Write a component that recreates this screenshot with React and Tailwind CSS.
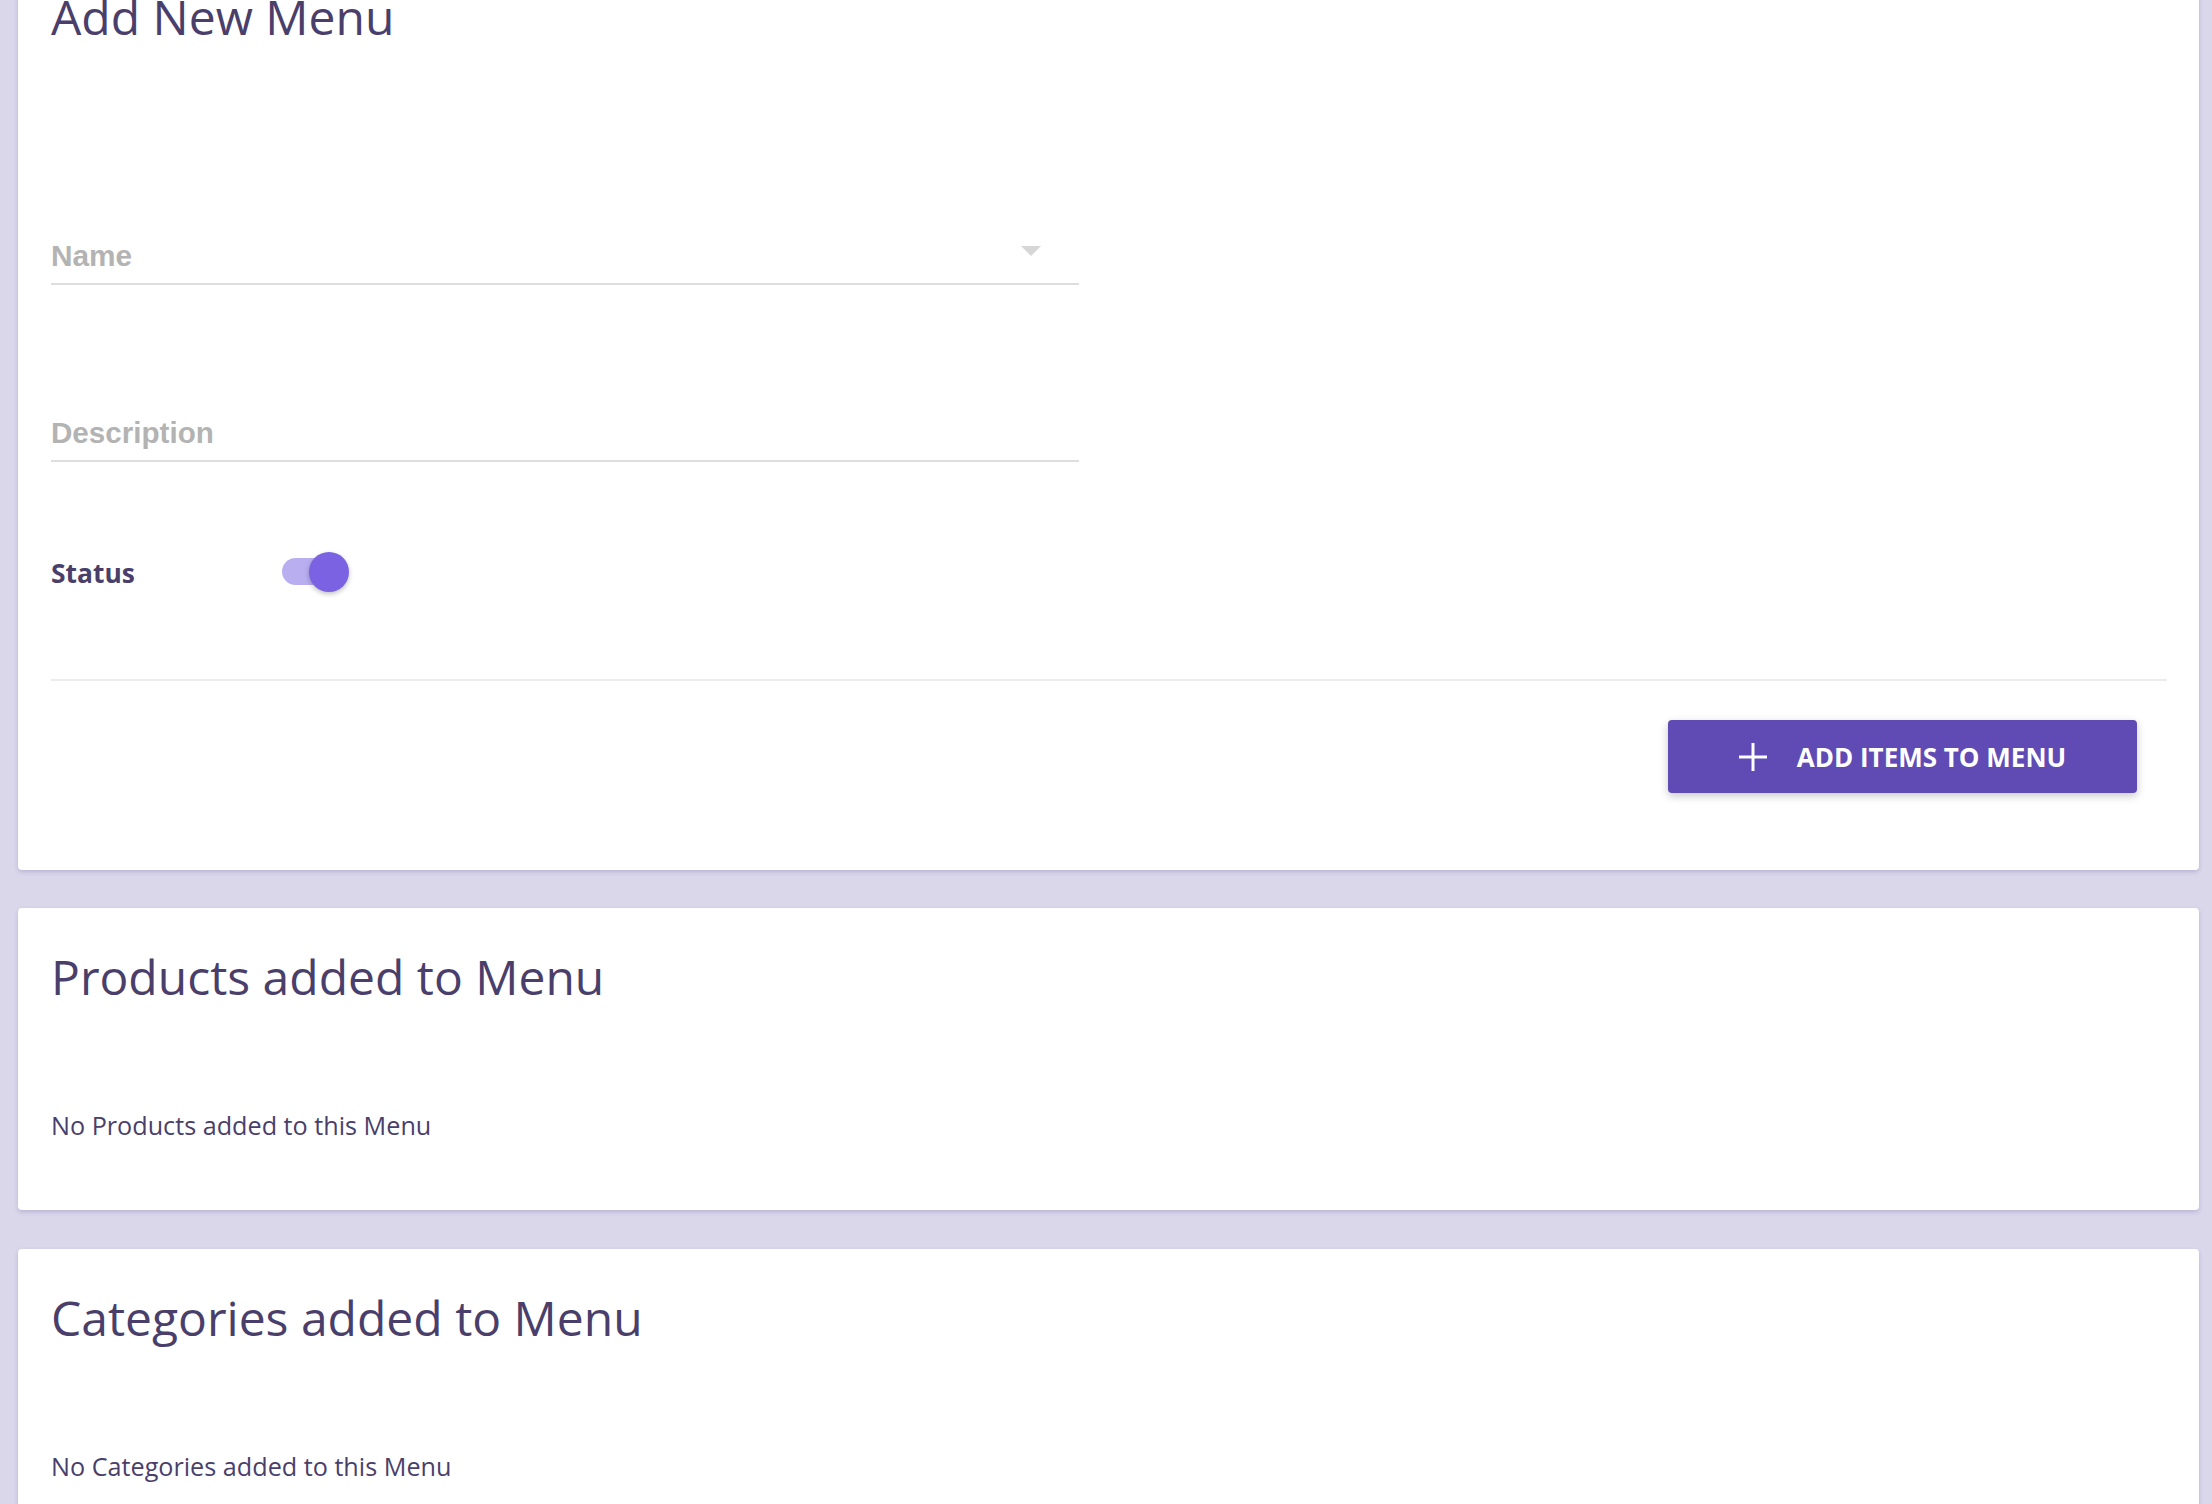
import React from "react";

function InfoCard({ title, text, className = "" }) {
  return (
    <div
      className={`rounded-[4px] bg-white pl-[33px] pr-[32px] pt-[40px] pb-[65px] shadow-[0_2px_4px_rgba(70,60,130,0.22)] ${className}`}
    >
      <h2 className="font-['Open_Sans',sans-serif] text-[48px] font-normal leading-[57.6px] text-[#4a3f6b]">
        {title}
      </h2>
      <p className="mt-[102px] font-['Open_Sans',sans-serif] text-[25.2px] leading-[37.5px] text-[#4a3f6b]">
        {text}
      </p>
    </div>
  );
}

export default function App() {
  return (
    <div className="h-[1504px] overflow-hidden bg-[#dad7eb] pl-[18px] pr-[13px]">
      {/* Add New Menu card */}
      <div className="mt-[-52px] rounded-[4px] bg-white pl-[33px] pr-[32px] pt-[40px] pb-[77px] shadow-[0_2px_4px_rgba(70,60,130,0.22)]">
        <h1 className="font-['Open_Sans',sans-serif] text-[48px] font-normal leading-[57.6px] text-[#4a3f6b]">
          Add New Menu
        </h1>

        {/* Name select */}
        <div className="mt-[194px] flex w-[1028px] items-start justify-between border-b-2 border-[#dedede] pb-[11px]">
          <span className="font-['Liberation_Sans',Arial,sans-serif] text-[29.8px] font-bold leading-[32px] text-[#b3b3b3]">
            Name
          </span>
          <svg
            className="mr-[38px] mt-[6px]"
            width="20"
            height="10"
            viewBox="0 0 20 10"
          >
            <polygon points="0,0 20,0 10,10" fill="#d6d6d6" />
          </svg>
        </div>

        {/* Description */}
        <div className="mt-[132px] w-[1028px] border-b-2 border-[#dedede] pb-[11px]">
          <span className="font-['Liberation_Sans',Arial,sans-serif] text-[29.6px] font-bold leading-[32px] text-[#b3b3b3]">
            Description
          </span>
        </div>

        {/* Status */}
        <div className="mt-[90px] flex h-[40px] items-center">
          <span className="w-[231px] shrink-0 pt-[3px] font-['Open_Sans',sans-serif] text-[26.4px] font-bold leading-[40px] text-[#4a3f6b]">
            Status
          </span>
          <div className="relative h-[40px] w-[67px]">
            <div className="absolute left-0 top-[6px] h-[27px] w-[62px] rounded-full bg-[#b9aef0]" />
            <div className="absolute left-[27px] top-0 h-[40px] w-[40px] rounded-full bg-[#7b62e3] shadow-[0_2px_5px_rgba(0,0,0,0.25)]" />
          </div>
        </div>

        {/* Divider */}
        <div className="mt-[87px] h-[2px] bg-[#ededed]" />

        {/* Button */}
        <div className="mt-[39px] flex justify-end pr-[30px]">
          <button className="flex h-[73px] w-[469px] items-center justify-center gap-[30px] rounded-[4px] bg-[#5f4bb3] shadow-[0_3px_8px_rgba(0,0,0,0.22)]">
            <svg className="mt-[2px]" width="28" height="28" viewBox="0 0 28 28">
              <line x1="14" y1="0" x2="14" y2="28" stroke="#ffffff" strokeWidth="3" />
              <line x1="0" y1="14" x2="28" y2="14" stroke="#ffffff" strokeWidth="3" />
            </svg>
            <span className="pt-[2px] font-['Open_Sans',sans-serif] text-[26px] font-bold leading-none text-white">
              ADD ITEMS TO MENU
            </span>
          </button>
        </div>
      </div>

      <InfoCard
        className="mt-[38px]"
        title="Products added to Menu"
        text="No Products added to this Menu"
      />
      <InfoCard
        className="mt-[39px]"
        title="Categories added to Menu"
        text="No Categories added to this Menu"
      />
    </div>
  );
}
